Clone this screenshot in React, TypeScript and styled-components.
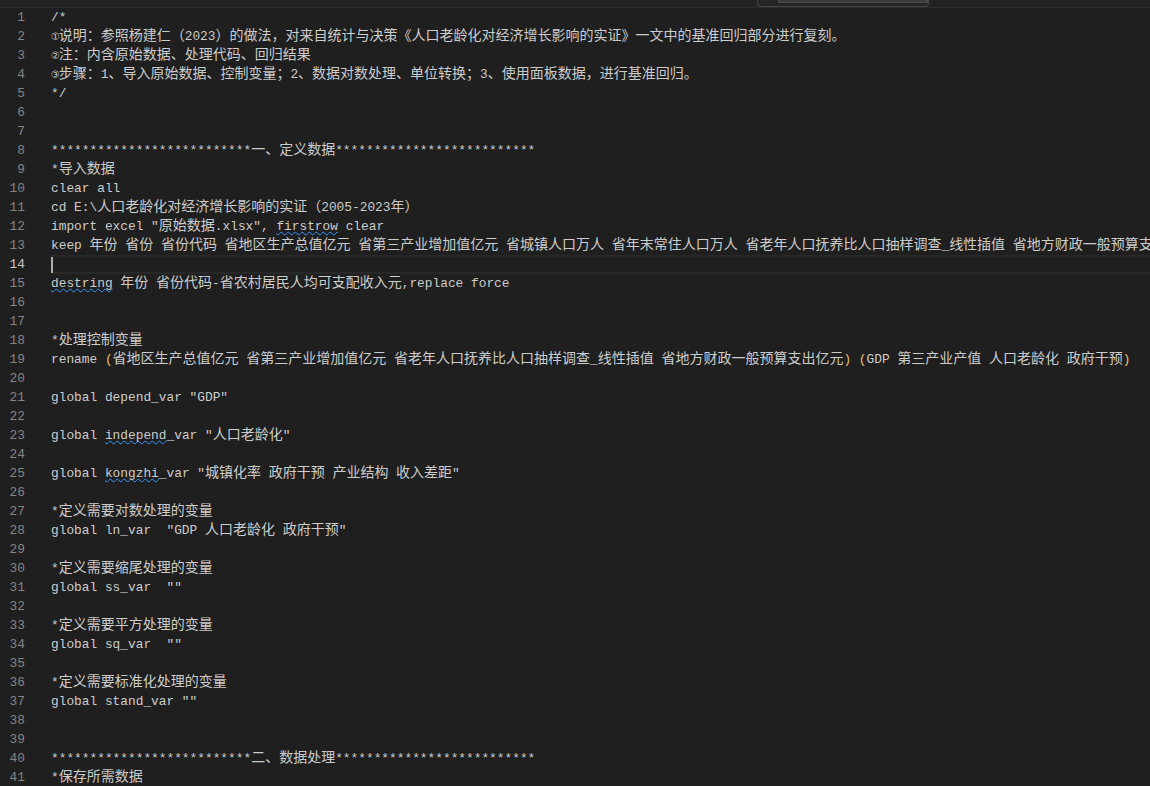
import React from "react";
import styled, { createGlobalStyle, css } from "styled-components";

const GlobalStyle = createGlobalStyle`
  html, body {
    margin: 0;
    padding: 0;
    background: #1f1f1f;
    overflow: hidden;
  }
  #root {
    width: 1150px;
    height: 786px;
    overflow: hidden;
  }
`;

const Editor = styled.div`
  position: relative;
  width: 1150px;
  height: 786px;
  background: #1f1f1f;
  overflow: hidden;
  display: flex;
  flex-direction: column;
`;

const TopStrip = styled.div`
  height: 7px;
  flex: none;
  background: #222222;
  border-bottom: 1px solid #2b2b2b;
`;

const FindWidget = styled.div`
  position: absolute;
  top: 0;
  left: 757px;
  width: 170px;
  height: 6px;
  background: #252526;
  border: 1px solid #454545;
  border-top: none;
  border-radius: 0 0 4px 4px;
  display: flex;
  justify-content: flex-end;
`;

const FindInput = styled.div`
  width: 148px;
  height: 2px;
  background: #3c3c3c;
  border: 1px solid #4a4a4a;
  border-top: none;
`;

const Lines = styled.div`
  display: flex;
  flex-direction: column;
`;

const Row = styled.div`
  display: flex;
  height: 19px;
  font-family: "Liberation Mono", "Noto Sans CJK SC", monospace;
  font-size: 12.83px;
  line-height: 19px;
`;

const LineNo = styled.div<{ $active?: boolean }>`
  flex: none;
  width: 25px;
  padding-right: 26px;
  text-align: right;
  color: ${(p) => (p.$active ? "#c6c6c6" : "#858585")};
  white-space: pre;
`;

const Code = styled.div<{ $active?: boolean }>`
  flex: 1;
  min-width: 0;
  color: #cccccc;
  white-space: pre;
  ${(p) =>
    p.$active &&
    css`
      box-shadow: inset 0 2px #282828, inset 0 -2px #282828;
    `}
`;

const Cjk = styled.span`
  font-family: "Noto Sans CJK SC", "Microsoft YaHei", sans-serif;
  font-size: 14px;
  line-height: 14px;
`;

const Circled = styled.span`
  display: inline-block;
  width: 7.7px;
  font-family: "DejaVu Sans", "Noto Sans CJK SC", sans-serif;
  font-size: 10px;
  line-height: 10px;
  text-align: center;
  color: #cccccc;
`;

const Squiggle = styled.span`
  text-decoration: underline wavy #3794ff;
  text-decoration-thickness: 1px;
  text-underline-offset: 1px;
  text-decoration-skip-ink: none;
`;

const Bracket = styled.span`
  color: #e2c06a;
`;

const Cursor = styled.span`
  display: inline-block;
  width: 2px;
  height: 16px;
  margin-top: 2px;
  vertical-align: top;
  background: #aeafad;
`;

type Part = string | { k: "sq" | "br" | "cursor"; v?: string };

const sq = (v: string): Part => ({ k: "sq", v });
const br = (v: string): Part => ({ k: "br", v });
const cursor: Part = { k: "cursor" };

const stars = "*".repeat(26);

const lines: Part[][] = [
  ["/*"],
  ["①说明：参照杨建仁（2023）的做法，对来自统计与决策《人口老龄化对经济增长影响的实证》一文中的基准回归部分进行复刻。"],
  ["②注：内含原始数据、处理代码、回归结果"],
  ["③步骤：1、导入原始数据、控制变量；2、数据对数处理、单位转换；3、使用面板数据，进行基准回归。"],
  ["*/"],
  [],
  [],
  [`${stars}一、定义数据${stars}`],
  ["*导入数据"],
  ["clear all"],
  ["cd E:\\人口老龄化对经济增长影响的实证（2005-2023年）"],
  ['import excel "原始数据.xlsx", ', sq("firstrow"), " clear"],
  [
    "keep 年份 省份 省份代码 省地区生产总值亿元 省第三产业增加值亿元 省城镇人口万人 省年末常住人口万人 省老年人口抚养比人口抽样调查_线性插值 省地方财政一般预算支",
  ],
  [cursor],
  [sq("destring"), " 年份 省份代码-省农村居民人均可支配收入元,replace force"],
  [],
  [],
  ["*处理控制变量"],
  [
    "rename ",
    br("("),
    "省地区生产总值亿元 省第三产业增加值亿元 省老年人口抚养比人口抽样调查_线性插值 省地方财政一般预算支出亿元",
    br(")"),
    " ",
    br("("),
    "GDP 第三产业产值 人口老龄化 政府干预",
    br(")"),
  ],
  [],
  ['global depend_var "GDP"'],
  [],
  ["global ", sq("independ"), '_var "人口老龄化"'],
  [],
  ["global ", sq("kongzhi"), '_var "城镇化率 政府干预 产业结构 收入差距"'],
  [],
  ["*定义需要对数处理的变量"],
  ['global ln_var  "GDP 人口老龄化 政府干预"'],
  [],
  ["*定义需要缩尾处理的变量"],
  ['global ss_var  ""'],
  [],
  ["*定义需要平方处理的变量"],
  ['global sq_var  ""'],
  [],
  ["*定义需要标准化处理的变量"],
  ['global stand_var ""'],
  [],
  [],
  [`${stars}二、数据处理${stars}`],
  ["*保存所需数据"],
];

const splitRe = /([\u2460-\u2473])|([\u3000-\u303f\u4e00-\u9fff\uff00-\uffef]+)/g;

function renderText(text: string, keyBase: string): React.ReactNode[] {
  const out: React.ReactNode[] = [];
  let last = 0;
  let m: RegExpExecArray | null;
  let i = 0;
  splitRe.lastIndex = 0;
  while ((m = splitRe.exec(text)) !== null) {
    if (m.index > last) out.push(text.slice(last, m.index));
    if (m[1]) out.push(<Circled key={`${keyBase}-c${i++}`}>{m[1]}</Circled>);
    else out.push(<Cjk key={`${keyBase}-k${i++}`}>{m[2]}</Cjk>);
    last = m.index + m[0].length;
  }
  if (last < text.length) out.push(text.slice(last));
  return out;
}

function renderPart(p: Part, idx: number): React.ReactNode {
  if (typeof p === "string") return <React.Fragment key={idx}>{renderText(p, `p${idx}`)}</React.Fragment>;
  if (p.k === "cursor") return <Cursor key={idx} />;
  if (p.k === "br") return <Bracket key={idx}>{p.v}</Bracket>;
  return <Squiggle key={idx}>{renderText(p.v || "", `s${idx}`)}</Squiggle>;
}

const ACTIVE = 14;

export default function App() {
  return (
    <>
      <GlobalStyle />
      <Editor>
        <TopStrip />
        <Lines>
          {lines.map((parts, i) => {
            const n = i + 1;
            const active = n === ACTIVE;
            return (
              <Row key={n}>
                <LineNo $active={active}>{n}</LineNo>
                <Code $active={active}>{parts.length ? parts.map(renderPart) : " "}</Code>
              </Row>
            );
          })}
        </Lines>
        <FindWidget>
          <FindInput />
        </FindWidget>
      </Editor>
    </>
  );
}
